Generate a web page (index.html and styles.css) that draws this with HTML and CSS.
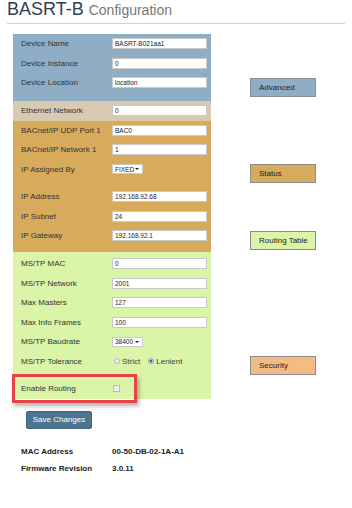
FILE: index.html
```html
<!DOCTYPE html>
<html lang="en">
<head>
    <meta charset="UTF-8">
    <meta name="viewport" content="width=device-width, initial-scale=1.0">
    <title>BASRT-B Configuration</title>
    <link rel="stylesheet" href="styles.css">
</head>
<body>
    <div class="page">
        <h1>BASRT-B <span class="sub">Configuration</span></h1>

        <div class="main">
            <div class="left">
                <form class="panel" method="post" action="">
                    <div class="section device">
                        <div class="row"><label>Device Name</label><input type="text" value="BASRT-B021aa1"></div>
                        <div class="row"><label>Device Instance</label><input type="text" value="0"></div>
                        <div class="row"><label>Device Location</label><input type="text" value="location"></div>
                    </div>

                    <div class="section ethernet">
                        <div class="row"><label>Ethernet Network</label><input type="text" value="0"></div>
                    </div>

                    <div class="section ip">
                        <div class="row"><label>BACnet/IP UDP Port 1</label><input type="text" value="BAC0"></div>
                        <div class="row"><label>BACnet/IP Network 1</label><input type="text" value="1"></div>
                        <div class="row">
                            <label>IP Assigned By</label>
                            <span class="select"><select><option>FIXED</option><option>DHCP</option></select></span>
                        </div>
                        <div class="spacer"></div>
                        <div class="row"><label>IP Address</label><input type="text" value="192.168.92.68"></div>
                        <div class="row"><label>IP Subnet</label><input type="text" value="24"></div>
                        <div class="row"><label>IP Gateway</label><input type="text" value="192.168.92.1"></div>
                    </div>

                    <div class="section mstp">
                        <div class="row"><label>MS/TP MAC</label><input type="text" value="0"></div>
                        <div class="row"><label>MS/TP Network</label><input type="text" value="2001"></div>
                        <div class="row"><label>Max Masters</label><input type="text" value="127"></div>
                        <div class="row"><label>Max Info Frames</label><input type="text" value="100"></div>
                        <div class="row">
                            <label>MS/TP Baudrate</label>
                            <span class="select"><select><option>38400</option><option>76800</option></select></span>
                        </div>
                        <div class="row">
                            <label>MS/TP Tolerance</label>
                            <span class="radios">
                                <input type="radio" name="tolerance" id="strict">
                                <label for="strict">Strict</label>
                                <input type="radio" name="tolerance" id="lenient" checked>
                                <label for="lenient">Lenient</label>
                            </span>
                        </div>
                        <div class="spacer"></div>
                        <div class="row routing">
                            <label>Enable Routing</label><input type="checkbox">
                            <span class="mark"></span>
                        </div>
                    </div>
                </form>

                <button class="save">Save Changes</button>

                <div class="info">
                    <div class="info-row"><span>MAC Address</span>00-50-DB-02-1A-A1</div>
                    <div class="info-row"><span>Firmware Revision</span>3.0.11</div>
                </div>
            </div>

            <div class="right">
                <a class="nav advanced">Advanced</a>
                <a class="nav status">Status</a>
                <a class="nav table">Routing Table</a>
                <a class="nav security">Security</a>
            </div>
        </div>
    </div>
</body>
</html>
```

FILE: styles.css
```css
body {
    margin: 0;
    font-family: "Liberation Sans", Arial, sans-serif;
    color: #333;
    background: #fff;
}

.page {
    padding: 0 7px;
}

h1 {
    margin: 0;
    padding-bottom: 4px;
    font-size: 18px;
    font-weight: normal;
    line-height: 18px;
    color: #2f3f4f;
    border-bottom: 1px solid #cfcfcf;
}

h1 .sub {
    font-size: 14px;
    color: #777;
}

.main {
    display: flex;
    margin-top: 10px;
}

.left {
    width: 198px;
    margin-left: 6px;
}

.panel {
    margin: 0;
}

.row {
    display: flex;
    align-items: center;
    height: 19.5px;
    padding-left: 8px;
    font-size: 8px;
}

.row > label {
    width: 91px;
    flex: none;
}

.row input[type=text] {
    box-sizing: border-box;
    width: 95px;
    height: 11px;
    margin: 0;
    padding: 0 2px;
    border: 1px solid #c9c9c9;
    background: #fff;
    font-family: "Liberation Sans", Arial, sans-serif;
    font-size: 6.5px;
    color: #222;
}

.spacer {
    height: 8px;
}

.device { background: #8fadc5; padding-bottom: 8.5px; }
.ethernet { background: #d7cab1; }
.ip { background: #d8aa5c; padding-bottom: 6.5px; }
.mstp { background: #daf4a8; padding-top: 2px; }

.select {
    position: relative;
    display: inline-block;
}

.select select {
    appearance: none;
    -webkit-appearance: none;
    box-sizing: border-box;
    width: 31px;
    height: 10px;
    margin: 0;
    padding: 0 0 0 2px;
    border: 1px solid #c9c9c9;
    border-radius: 0;
    background: #fff;
    font-family: "Liberation Sans", Arial, sans-serif;
    font-size: 6.5px;
    color: #222;
}

.select::after {
    content: "";
    position: absolute;
    right: 4px;
    top: 4px;
    border-left: 2px solid transparent;
    border-right: 2px solid transparent;
    border-top: 2.5px solid #222;
}

.radios {
    display: flex;
    align-items: center;
    font-size: 8px;
    color: #444;
}

.radios input {
    appearance: none;
    -webkit-appearance: none;
    box-sizing: border-box;
    width: 6px;
    height: 6px;
    margin: 0 2px 0 2px;
    border: 1px solid #b5b5b5;
    border-radius: 50%;
    background: #f2f2f2;
}

.radios input:checked {
    background: radial-gradient(circle, #3f5f8f 0 1.5px, #e8eef6 1.6px);
    border-color: #8b9bb5;
}

.radios label {
    margin-right: 6px;
}

.routing {
    position: relative;
}

.routing input {
    appearance: none;
    -webkit-appearance: none;
    box-sizing: border-box;
    width: 7px;
    height: 7px;
    margin: 0 0 0 1px;
    border: 1px solid #bdbdbd;
    background: #f3f3f3;
}

.routing .mark {
    position: absolute;
    left: -1px;
    top: -5px;
    width: 125px;
    height: 29px;
    box-sizing: border-box;
    border: 3px solid #e8434b;
    box-shadow: 2px 3px 4px rgba(0, 0, 0, 0.3);
}

.save {
    display: block;
    width: 66px;
    height: 18px;
    margin: 12px 0 0 13px;
    padding: 0;
    border: 1px solid #3f6580;
    border-radius: 2px;
    background: #4d758f;
    color: #fff;
    font-family: "Liberation Sans", Arial, sans-serif;
    font-size: 8px;
}

.info {
    margin-top: 14.5px;
}

.info-row {
    display: flex;
    align-items: center;
    height: 17px;
    padding-left: 8px;
    font-size: 8px;
    font-weight: bold;
    color: #222;
}

.info-row span {
    width: 91px;
}

.right {
    display: flex;
    flex-direction: column;
    width: 66px;
    margin-left: 39px;
}

.nav {
    box-sizing: border-box;
    display: flex;
    align-items: center;
    height: 19px;
    padding-left: 8px;
    border: 1px solid #8c8c8c;
    font-size: 8px;
    color: #222;
}

.advanced { margin-top: 44px; background: #8fadc5; }
.status { margin-top: 67px; background: #d8aa5c; }
.table { margin-top: 48px; background: #daf4a8; }
.security { margin-top: 106px; background: #f4bc84; }
```
